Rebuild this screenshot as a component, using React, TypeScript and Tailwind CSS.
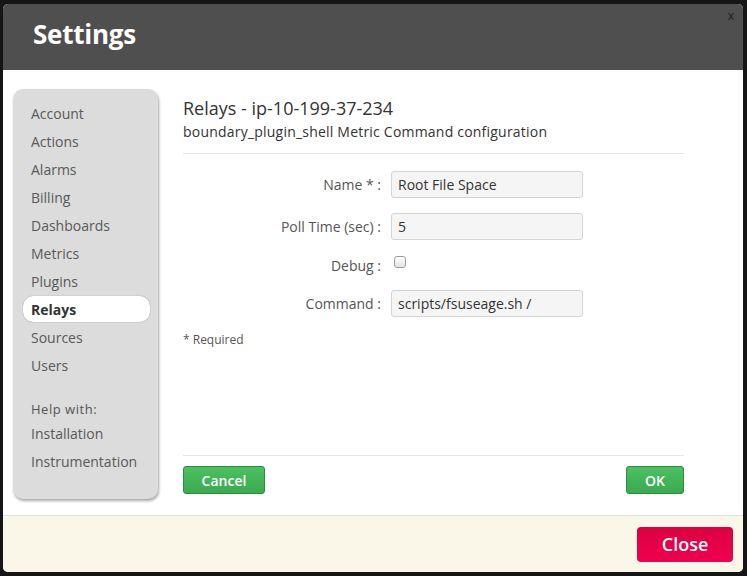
const navItems = [
  "Account",
  "Actions",
  "Alarms",
  "Billing",
  "Dashboards",
  "Metrics",
  "Plugins",
  "Relays",
  "Sources",
  "Users",
];

const helpItems = ["Installation", "Instrumentation"];

function Field({ label, value }: { label: string; value: string }) {
  return (
    <div className="flex items-center">
      <label className="w-[208px] pr-[10px] text-right text-[14px] text-[#555]">{label}</label>
      <input
        readOnly
        value={value}
        className="h-[27px] w-[192px] rounded-[3px] border border-[#d4d4d4] bg-[#f5f5f5] px-[6px] text-[14px] text-[#333] outline-none"
      />
    </div>
  );
}

export default function App() {
  return (
    <div className="h-[576px] w-[747px] bg-[#151515] pl-[3px] pr-[4px] pt-[4px] pb-[4px] font-['Open_Sans','Lato',sans-serif]">
      <div className="flex h-full flex-col overflow-hidden rounded-[5px] bg-white">
        {/* header */}
        <div className="relative h-[66px] bg-[#4f4f50] pl-[30px] pt-[13px]">
          <h1 className="text-[26px] font-bold leading-[34px] tracking-[-0.01em] text-white">Settings</h1>
          <span className="absolute right-[9px] top-[3px] text-[12px] text-[#1e1e1e]">x</span>
        </div>

        {/* body */}
        <div className="flex flex-1 pl-[10px] pr-[59px] pt-[19px]">
          <aside className="h-[410px] w-[145px] shrink-0 rounded-[10px] bg-[#dcdcdc] pt-[10px] shadow-[1px_2px_3px_rgba(0,0,0,0.35)]">
            <ul className="flex flex-col">
              {navItems.map((n) => {
                const active = n === "Relays";
                return (
                  <li key={n} className="h-[28px] pl-[10px] pr-[8px] py-[1px]">
                    <div
                      className={[
                        "flex h-[26px] items-center rounded-[10px] pl-[8px] text-[14px]",
                        active
                          ? "bg-white font-bold text-[#333] shadow-[0_0_1px_rgba(0,0,0,0.5)]"
                          : "text-[#595959]",
                      ].join(" ")}
                    >
                      {n}
                    </div>
                  </li>
                );
              })}
            </ul>
            <div className="mt-[21px] pl-[18px] text-[13px] tracking-[0.04em] text-[#555]">Help with:</div>
            <ul className="flex flex-col">
              {helpItems.map((n) => (
                <li key={n} className="flex h-[28px] items-center pl-[18px] text-[14px] text-[#595959]">
                  {n}
                </li>
              ))}
            </ul>
          </aside>

          <section className="flex flex-1 flex-col pl-[25px]">
            <h2 className="mt-[7px] text-[18px] leading-[24px] text-[#333]">Relays - ip-10-199-37-234</h2>
            <p className="mt-[2px] text-[14px] leading-[20px] tracking-[0.015em] text-[#333]">
              boundary_plugin_shell Metric Command configuration
            </p>
            <div className="mt-[11px] border-t border-[#e8e6da]" />

            <div className="mt-[17px] flex flex-col gap-[15px]">
              <Field label="Name * :" value="Root File Space" />
              <Field label="Poll Time (sec) :" value="5" />
              <div className="flex h-[20px] items-center">
                <label className="w-[208px] pr-[10px] text-right text-[14px] text-[#555]">Debug :</label>
                <span className="ml-[3px] -mt-[6px] h-[12px] w-[12px] rounded-[3px] border border-[#9a9a9a] bg-gradient-to-b from-white to-[#e4e4e4]" />
              </div>
              <Field label="Command :" value="scripts/fsuseage.sh /" />
            </div>

            <div className="mt-[14px] text-[12px] text-[#555]">* Required</div>

            <div className="mt-auto border-t border-[#e8e6da]" />
            <div className="flex justify-between pb-[21px] pt-[10px]">
              <button className="h-[28px] w-[82px] rounded-[3px] border border-[#2e8b3e] bg-gradient-to-b from-[#4cc062] to-[#3aaa4f] text-[14px] font-semibold text-white">
                Cancel
              </button>
              <button className="h-[28px] w-[58px] rounded-[3px] border border-[#2e8b3e] bg-gradient-to-b from-[#4cc062] to-[#3aaa4f] text-[14px] font-semibold text-white">
                OK
              </button>
            </div>
          </section>
        </div>

        {/* footer */}
        <div className="flex h-[57px] items-center justify-end border-t border-[#e6e2cf] bg-[#faf7e8] pr-[10px]">
          <button className="h-[35px] w-[96px] rounded-[4px] bg-gradient-to-b from-[#db0040] to-[#f00050] text-[18px] font-semibold text-white">
            Close
          </button>
        </div>
      </div>
    </div>
  );
}
